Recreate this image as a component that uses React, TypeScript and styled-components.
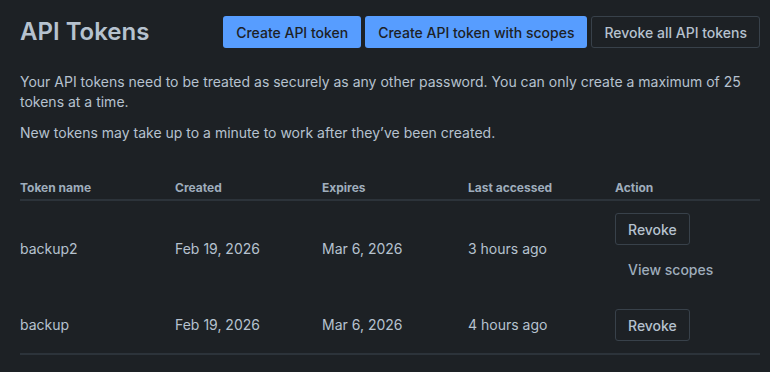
import React from "react";
import styled, { createGlobalStyle } from "styled-components";

const GlobalStyle = createGlobalStyle`
  html, body {
    margin: 0;
    padding: 0;
    background: #1d2125;
  }
  body {
    font-family: Inter, "Noto Sans", sans-serif;
    color: #b6c2cf;
    -webkit-font-smoothing: antialiased;
  }
`;

interface Token {
  name: string;
  created: string;
  expires: string;
  lastAccessed: string;
  hasScopes?: boolean;
}

const tokens: Token[] = [
  { name: "backup2", created: "Feb 19, 2026", expires: "Mar 6, 2026", lastAccessed: "3 hours ago", hasScopes: true },
  { name: "backup", created: "Feb 19, 2026", expires: "Mar 6, 2026", lastAccessed: "4 hours ago" },
];

export default function App() {
  return (
    <>
      <GlobalStyle />
      <UIPage>
        <UIHeader>
          <UITitle>API Tokens</UITitle>
          <UIActions>
            <UIButton $variant="primary">Create API token</UIButton>
            <UIButton $variant="primary">Create API token with scopes</UIButton>
            <UIButton $variant="default">Revoke all API tokens</UIButton>
          </UIActions>
        </UIHeader>

        <UIText>
          Your API tokens need to be treated as securely as any other password. You can only create a maximum of 25
          tokens at a time.
        </UIText>
        <UIText>New tokens may take up to a minute to work after they’ve been created.</UIText>

        <UITable>
          <colgroup>
            <col style={{ width: 155 }} />
            <col style={{ width: 147 }} />
            <col style={{ width: 146 }} />
            <col style={{ width: 147 }} />
            <col />
          </colgroup>
          <thead>
            <tr>
              <UIHeadCell>Token name</UIHeadCell>
              <UIHeadCell>Created</UIHeadCell>
              <UIHeadCell>Expires</UIHeadCell>
              <UIHeadCell>Last accessed</UIHeadCell>
              <UIHeadCell>Action</UIHeadCell>
            </tr>
          </thead>
          <tbody>
            {tokens.map((token) => (
              <tr key={token.name}>
                <UICell>{token.name}</UICell>
                <UICell>{token.created}</UICell>
                <UICell>{token.expires}</UICell>
                <UICell>{token.lastAccessed}</UICell>
                <UICell>
                  <UIActionStack>
                    <UIButton $variant="default">Revoke</UIButton>
                    {token.hasScopes && <UIButton $variant="subtle">View scopes</UIButton>}
                  </UIActionStack>
                </UICell>
              </tr>
            ))}
          </tbody>
        </UITable>
      </UIPage>
    </>
  );
}

const UIPage = styled.div`
  padding: 16px 10px 0 20px;
`;

const UIHeader = styled.div`
  display: flex;
  align-items: center;
  justify-content: space-between;
  margin-bottom: 24px;
`;

const UITitle = styled.h1`
  margin: 0;
  font-size: 24px;
  line-height: 28px;
  font-weight: 600;
  color: #b6c2cf;
`;

const UIActions = styled.div`
  display: flex;
  gap: 4px;
`;

const UIButton = styled.button<{ $variant: "primary" | "default" | "subtle" }>`
  height: 32px;
  padding: 0 12px;
  border-radius: 3px;
  font-family: inherit;
  font-size: 14px;
  font-weight: 500;
  white-space: nowrap;
  cursor: pointer;
  background: ${(p) => (p.$variant === "primary" ? "#579dff" : "transparent")};
  color: ${(p) => (p.$variant === "primary" ? "#1d2125" : p.$variant === "subtle" ? "#9fadbc" : "#b6c2cf")};
  border: 1px solid ${(p) => (p.$variant === "default" ? "#38414a" : "transparent")};
`;

const UIText = styled.p`
  margin: 0 0 11px;
  font-size: 14px;
  line-height: 20px;
  max-width: 740px;
`;

const UITable = styled.table`
  width: 740px;
  margin-top: 33px;
  border-collapse: collapse;
  table-layout: fixed;
  border-bottom: 2px solid #2c333a;
`;

const UIHeadCell = styled.th`
  text-align: left;
  padding: 4px 0 3px;
  font-size: 12px;
  line-height: 16px;
  font-weight: 700;
  color: #9fadbc;
  border-bottom: 2px solid #2c333a;
`;

const UICell = styled.td`
  padding: 12px 0;
  font-size: 14px;
  line-height: 20px;
  vertical-align: middle;
`;

const UIActionStack = styled.div`
  display: flex;
  flex-direction: column;
  align-items: flex-start;
  gap: 8px;
`;
